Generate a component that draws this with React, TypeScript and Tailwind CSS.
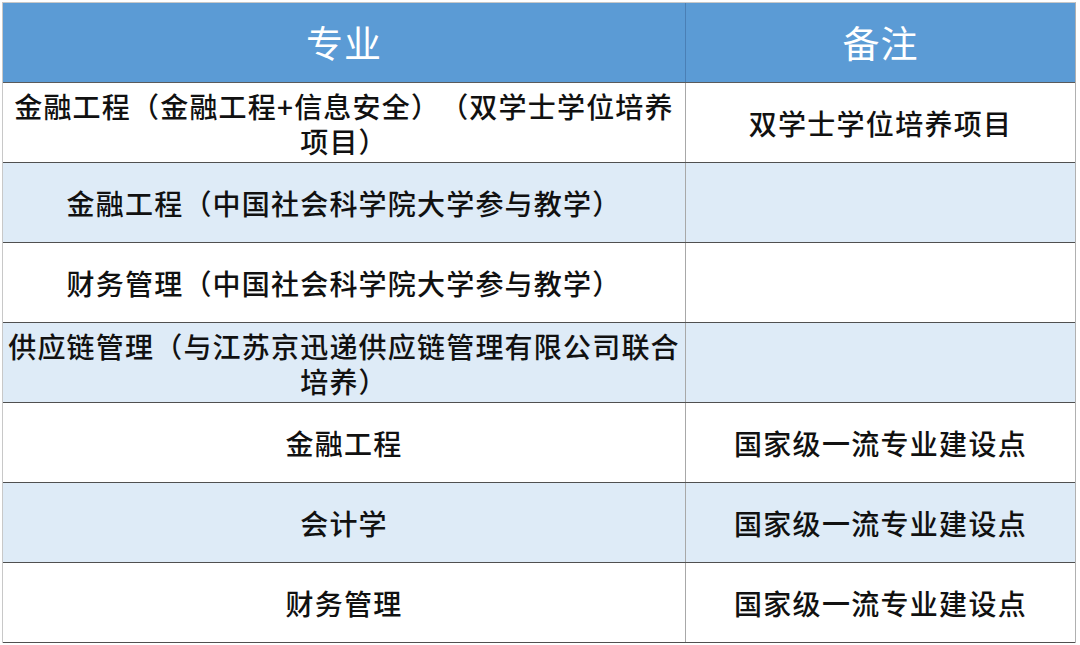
import React from "react";

type Row = { a: React.ReactNode; b: string; alt: boolean };

const rows: Row[] = [
  {
    a: (
      <>
        金融工程（金融工程+信息安全）（双学士学位培养
        <br />
        项目）
      </>
    ),
    b: "双学士学位培养项目",
    alt: false,
  },
  { a: "金融工程（中国社会科学院大学参与教学）", b: "", alt: true },
  { a: "财务管理（中国社会科学院大学参与教学）", b: "", alt: false },
  {
    a: (
      <>
        供应链管理（与江苏京迅递供应链管理有限公司联合
        <br />
        培养）
      </>
    ),
    b: "",
    alt: true,
  },
  { a: "金融工程", b: "国家级一流专业建设点", alt: false },
  { a: "会计学", b: "国家级一流专业建设点", alt: true },
  { a: "财务管理", b: "国家级一流专业建设点", alt: false },
];

export default function App() {
  return (
    <div
      className="w-[1080px] h-[645px] overflow-hidden bg-white pt-[2px] pl-[2px] [text-spacing-trim:space-all]"
      style={{ fontFamily: '"Noto Sans CJK SC", "Noto Sans", sans-serif' }}
    >
      <div className="w-[1074px] border-l border-t border-[#c8c8c8] border-r border-r-[#b0b0b0]">
        <div className="grid grid-cols-[683px_1fr] h-[80px] bg-[#5b9bd5] border-b border-[#5a5a5a]">
          <div className="flex items-center justify-center border-r border-[#4a7fb5] text-white text-[37px] leading-none tracking-[1px]">
            专业
          </div>
          <div className="flex items-center justify-center text-white text-[37px] leading-none tracking-[1px]">
            备注
          </div>
        </div>
        {rows.map((r, i) => (
          <div
            key={i}
            className={`grid grid-cols-[683px_1fr] h-[80px] border-b border-[#505050] ${
              r.alt ? "bg-[#deebf7]" : "bg-white"
            }`}
          >
            <div className="flex items-center justify-center border-r border-[#a8a8a8] pt-[2px] whitespace-nowrap text-center text-[28px] leading-[35px] font-medium text-[#111] tracking-[1.2px]">
              <span>{r.a}</span>
            </div>
            <div className="flex items-center justify-center pt-[2px] text-center text-[28px] leading-[35px] font-medium text-[#111] tracking-[1.3px]">
              {r.b}
            </div>
          </div>
        ))}
      </div>
    </div>
  );
}
